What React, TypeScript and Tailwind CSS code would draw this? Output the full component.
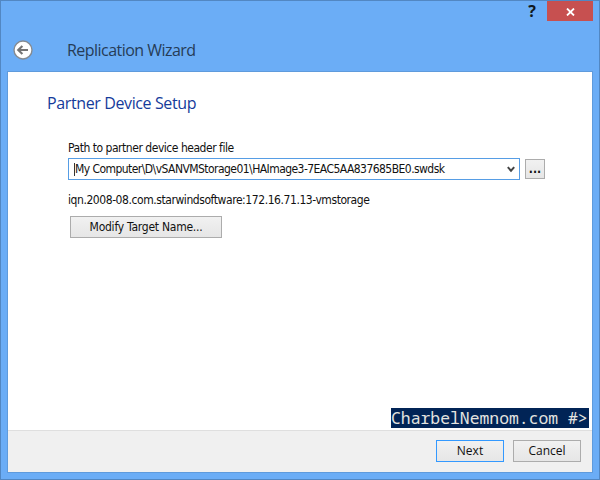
import type { ReactNode } from 'react';

function BackIcon(): React.JSX.Element {
  return (
    <svg width="20" height="20" viewBox="0 0 20 20" fill="none">
      <circle cx="10" cy="10" r="9" fill="#fff" stroke="#858b92" strokeWidth="1.4" />
      <path d="M5.2 10H15M9.4 5.9L5.2 10l4.2 4.1" stroke="#747474" strokeWidth="2.1" />
    </svg>
  );
}

function TitleBar(): React.JSX.Element {
  return (
    <div className="flex h-[20px] shrink-0 justify-end">
      <div className="flex w-[26px] justify-center font-['Open_Sans',sans-serif] text-[16px] leading-[20px] font-bold text-[#101820]">
        ?
      </div>
      <button className="ml-0.5 flex h-[20px] w-[46px] items-center justify-center bg-[#c75050]">
        <svg width="9" height="8" viewBox="0 0 9 8" className="mt-[2px]">
          <path d="M1 .5l7 7M8 .5l-7 7" stroke="#fff" strokeWidth="1.8" />
        </svg>
      </button>
    </div>
  );
}

function Button(props: { className: string; children: ReactNode }): React.JSX.Element {
  return (
    <button
      className={`flex shrink-0 items-center justify-center border bg-linear-to-b from-[#f1f1f1] to-[#e6e6e6] whitespace-nowrap text-[#111] ${props.className}`}
    >
      {props.children}
    </button>
  );
}

function PathField(): React.JSX.Element {
  return (
    <div className="mt-[2px] flex items-center">
      <div className="flex h-[22px] w-[452px] items-center border border-[#569de5] bg-white pr-1 pl-[5px]">
        <span className="h-[13px] w-px shrink-0 bg-[#333]" />
        <span className="flex-1 pb-px text-[12px] tracking-[-0.55px] whitespace-nowrap">
          My Computer\D\vSANVMStorage01\HAImage3-7EAC5AA837685BE0.swdsk
        </span>
        <svg width="8" height="7" viewBox="0 0 8 7" fill="none">
          <path d="M.8 1.2L4 4.7l3.2-3.5" stroke="#444" strokeWidth="2" />
        </svg>
      </div>
      <Button className="ml-[5px] h-[20px] w-[20px] border-[#acacac] text-[12px] font-bold">
        ...
      </Button>
    </div>
  );
}

export default function App(): React.JSX.Element {
  return (
    <div className="flex h-[480px] w-[600px] flex-col border border-[#5287c2] bg-[#6badf6] px-[6px] pb-[6px] font-['DejaVu_Sans_Condensed','DejaVu_Sans',sans-serif] text-[#111]">
      <TitleBar />
      <header className="flex h-[50px] shrink-0 items-center pt-[7px] pl-[6px]">
        <BackIcon />
        <h1 className="ml-[34px] font-['Open_Sans',sans-serif] text-[16px] tracking-[-0.53px] whitespace-nowrap text-[#263c57]">
          Replication Wizard
        </h1>
      </header>
      <div className="flex min-h-0 flex-1 flex-col border border-[#5f9bdc] bg-white">
        <main className="flex min-h-0 flex-1 flex-col pl-[60px]">
          <h2 className="mt-[19px] -ml-[21px] font-['Open_Sans',sans-serif] text-[16px] leading-[24px] tracking-[-0.38px] whitespace-nowrap text-[#153b9b]">
            Partner Device Setup
          </h2>
          <label className="mt-[25px] text-[12px] leading-[16px] tracking-[-0.47px] whitespace-nowrap">
            Path to partner device header file
          </label>
          <PathField />
          <p className="mt-[12px] text-[12px] leading-[16px] tracking-[-0.43px] whitespace-nowrap">
            iqn.2008-08.com.starwindsoftware:172.16.71.13-vmstorage
          </p>
          <Button className="mt-[8px] ml-[2px] h-[22px] w-[152px] border-[#acacac] text-[12px] tracking-[-0.24px]">
            Modify Target Name...
          </Button>
          <div className="mt-auto mr-[3px] mb-[2px] ml-auto h-[20px] w-[198px] bg-[#012456] font-['Noto_Sans_Mono','DejaVu_Sans_Mono',monospace] text-[16.4px] leading-[20px] whitespace-nowrap text-[#e4e4e0]">
            CharbelNemnom.com #&gt;
          </div>
        </main>
        <footer className="flex h-[42px] shrink-0 justify-end gap-[9px] border-t border-[#dfdfdf] bg-[#f0f0f0] pt-[9px] pr-[11px] font-['Open_Sans',sans-serif] text-[12px]">
          <Button className="h-[22px] w-[68px] border-[#3399ff]">Next</Button>
          <Button className="h-[22px] w-[68px] border-[#acacac]">Cancel</Button>
        </footer>
      </div>
    </div>
  );
}
